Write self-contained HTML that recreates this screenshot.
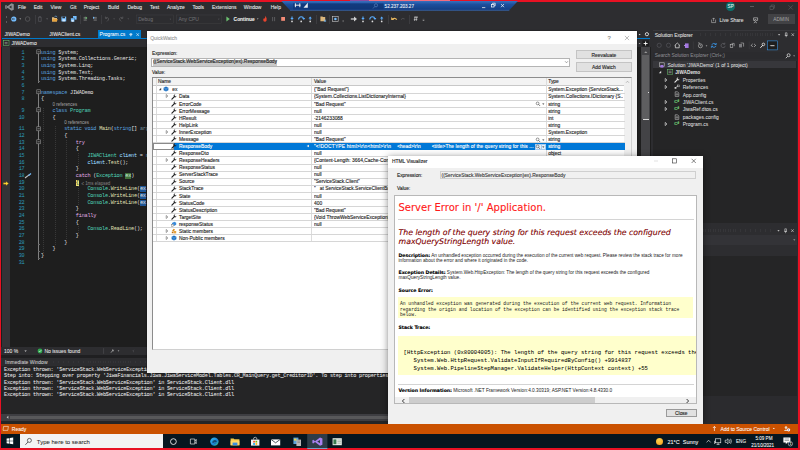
<!DOCTYPE html><html><head><meta charset="utf-8"><title>QuickWatch</title><style>
html,body{margin:0;padding:0;}
body{-webkit-text-stroke:0.05px currentColor;width:800px;height:450px;overflow:hidden;background:#e81123;position:relative;font-family:"Liberation Sans",sans-serif;font-size:5px;color:#f1f1f1;}
.a{position:absolute;white-space:nowrap;}
.t{position:absolute;white-space:nowrap;line-height:1;}
.ui{font-family:"Liberation Sans",sans-serif;font-size:5px;}
.t.ui{margin-top:0.8px}
.mono{font-family:"Liberation Mono",monospace;}
.code{-webkit-text-stroke:0.04px currentColor;font-family:"Liberation Mono",monospace;font-size:5.2px;letter-spacing:-0.203px;color:#dcdcdc;white-space:pre;line-height:6.667px;height:6.667px;position:absolute;left:0;}
.kw{color:#569cd6}.cl{color:#4ec9b0}.ctl{color:#d8a0df}.fn{color:#dcdcaa}.lv{color:#9cdcfe}
.ln{position:absolute;width:22.5px;text-align:right;left:2px;font-family:"Liberation Mono",monospace;font-size:5.2px;letter-spacing:-0.203px;color:#2b91af;line-height:6.667px;height:6.667px;}
.lens{position:absolute;font-family:"Liberation Sans",sans-serif;font-size:4.45px;color:#999;line-height:5px;height:5px;white-space:pre;}
.dk{color:#1e1e1e}
#qw,#hv{-webkit-text-stroke:0.12px currentColor}
.ar{-webkit-text-stroke:0;color:#1a1a1a}
.row{position:absolute;left:0;width:100%;height:7.083px;border-bottom:0.42px solid #e4e4e4;box-sizing:border-box;}
.cell{position:absolute;top:0;line-height:6.7px;font-size:4.9px;color:#1e1e1e;white-space:nowrap;overflow:hidden;}
</style></head><body>
<div class="a" style="left:1.3px;top:1.5px;width:797.2px;height:422.2px;background:#2d2d30"></div>
<svg class="a" style="left:5px;top:2.6px" width="9" height="8" viewBox="0 0 18 16"><path d="M13 0.5 L17.5 2.5 V13.5 L13 15.5 L5 9.5 L2 12 L0.5 11 V5 L2 4 L5 6.5 Z M13 4.8 L8.3 8 L13 11.2 Z M2 6.3 V9.7 L3.8 8 Z" fill="#8e8e92"/></svg>
<div class="t ui" style="left:18px;top:4px;color:#f1f1f1">File</div>
<div class="t ui" style="left:33.7px;top:4px;color:#f1f1f1">Edit</div>
<div class="t ui" style="left:50.6px;top:4px;color:#f1f1f1">View</div>
<div class="t ui" style="left:70px;top:4px;color:#f1f1f1">Git</div>
<div class="t ui" style="left:83.7px;top:4px;color:#f1f1f1">Project</div>
<div class="t ui" style="left:108px;top:4px;color:#f1f1f1">Build</div>
<div class="t ui" style="left:127.4px;top:4px;color:#f1f1f1">Debug</div>
<div class="t ui" style="left:150px;top:4px;color:#f1f1f1">Test</div>
<div class="t ui" style="left:167px;top:4px;color:#f1f1f1">Analyze</div>
<div class="t ui" style="left:192.4px;top:4px;color:#f1f1f1">Tools</div>
<div class="t ui" style="left:212px;top:4px;color:#f1f1f1">Extensions</div>
<div class="t ui" style="left:243.7px;top:4px;color:#f1f1f1">Window</div>
<div class="t ui" style="left:270.7px;top:4px;color:#f1f1f1">Help</div>
<svg class="a" style="left:280px;top:1px" width="240" height="10" viewBox="0 0 240 10"><defs><linearGradient id="rg" x1="0" y1="0" x2="0" y2="1"><stop offset="0" stop-color="#3a70bd"/><stop offset="0.35" stop-color="#1c4f9e"/><stop offset="1" stop-color="#123c7e"/></linearGradient></defs><path d="M1.4 0 H237.9 L229 9.6 H10.3 Z" fill="url(#rg)"/><rect x="13" y="2.4" width="90.5" height="6.4" fill="#0f3474" opacity="0.75"/><path d="M10 9.3 H229.3" stroke="#4f7fc6" stroke-width="0.5"/><rect x="15" y="5.2" width="95" height="0" fill="none"/><g fill="#fff" stroke="#fff" stroke-width="0.6"><path d="M14.8 4.2 H20.5 M15.4 2.3 V6.2 M19.8 2.3 V6.2" fill="none" stroke-width="0.9"/><path d="M23.5 6.8 L27.8 1.8 V6.8 Z" stroke="none" opacity="0.9"/></g><g stroke="#6f94cf" stroke-width="0.5" fill="none"><circle cx="96" cy="4.3" r="1.6"/><path d="M94.8 5.5 L93 7.5"/></g><g stroke="#fff" stroke-width="0.7" fill="none"><path d="M202 6.6 H205.3"/><rect x="211.6" y="3.4" width="2.4" height="2.6"/><path d="M212.6 3.4 V2.2 H215.2 V4.8 H214"/><path d="M221 3 L224 6.2 M224 3 L221 6.2"/></g></svg>
<div class="t ui" style="left:384.6px;top:3.8px;color:#fff;font-size:4.6px">52.237.203.27</div>
<div class="a" style="left:350px;top:0;width:100px;height:1.4px;background:linear-gradient(90deg,#8a4aa0 0 19px,#f26d80 19px)"></div>
<div class="a" style="left:726.4px;top:2.4px;width:8.4px;height:8.4px;border-radius:50%;background:#0c6e6a"></div>
<div class="t ui" style="left:727.6px;top:4.4px;font-size:4.6px;color:#f0f8f6">SP</div>
<svg class="a" style="left:744px;top:2px" width="54" height="11" viewBox="0 0 54 11"><g stroke="#6a6a6e" stroke-width="0.5" fill="none"><path d="M6 4.5 H10" stroke="#8a8a8a"/><rect x="26" y="4.2" width="3.2" height="3.2"/><path d="M27.2 4.2 V3 H30.4 V6.2 H29.2"/><path d="M44.5 3.3 L48.8 7.6 M48.8 3.3 L44.5 7.6"/></g></svg>
<div class="a" style="left:5.8px;top:15px;width:0.8px;height:8px;background:repeating-linear-gradient(#5a5a5e 0 0.5px,transparent 0.5px 1.25px)"></div>
<svg class="a" style="left:0;top:13px" width="440" height="13" viewBox="0 0 440 13"><circle cx="13.8" cy="6" r="2.6" fill="#75beff"/><path d="M15 6 H12.4 M13.4 4.9 L12.3 6 L13.4 7.1" stroke="#2d2d30" stroke-width="0.6" fill="none"/><path d="M19.4 5.6 h1.8 l-0.9 1 z" fill="#c8c8c8"/><circle cx="27.6" cy="6" r="2.3" fill="none" stroke="#5e5e62" stroke-width="0.7"/><path d="M38.6 4 h2.6 v4.4 h-2.6 z M40 3.3 v1.4 M39.3 4 h1.4" stroke="#606065" stroke-width="0.6" fill="none"/><path d="M46.2 5.6 h1.8 l-0.9 1 z" fill="#77777a"/><path d="M52 4.2 h2 l0.6 0.7 h2.4 v3.6 h-5 z" fill="#dcb67a"/><path d="M52.8 6 h4.9 l-0.8 2.5 h-4.9 z" fill="#e8a33d"/><path d="M54.6 3.4 q1.6 -1 2.6 0.6" stroke="#75beff" stroke-width="0.6" fill="none"/><rect x="61.4" y="3.6" width="4.8" height="4.8" fill="#75beff"/><rect x="62.4" y="3.6" width="2.6" height="1.6" fill="#2d2d30"/><rect x="62.4" y="6.4" width="2.8" height="2" fill="#cfe8ff"/><rect x="73" y="3" width="3.6" height="3.6" fill="#75beff"/><rect x="70.8" y="5" width="3.8" height="3.8" fill="#75beff" stroke="#2d2d30" stroke-width="0.4"/><rect x="71.6" y="7" width="2.2" height="1.8" fill="#cfe8ff"/><path d="M83.6 4.4 h3.2 M83.6 5.8 h3.2 M83.6 7.2 h3.2" stroke="#9a9a9a" stroke-width="0.6"/><path d="M85.6 3.6 l1.8 1.4 l-1.8 1.4 z" fill="#6cc070"/><path d="M93.6 4.4 h3.2 M93.6 5.8 h3.2 M93.6 7.2 h3.2" stroke="#9a9a9a" stroke-width="0.6"/><path d="M93 3.6 l1.6 1.2 l-1.6 1.2 z" fill="#75beff"/><path d="M105.6 5 q2.2 -1.6 3 0.6 q0.2 1.6 -1.6 2.8 M105.4 3.6 v1.8 h1.8" stroke="#5e5e62" stroke-width="0.7" fill="none"/><path d="M113.2 5.6 h1.8 l-0.9 1 z" fill="#5e5e62"/><path d="M122.6 5 q-2.2 -1.6 -3 0.6 q-0.2 1.6 1.6 2.8 M122.8 3.6 v1.8 h-1.8" stroke="#5e5e62" stroke-width="0.7" fill="none"/><path d="M127.4 5.6 h1.8 l-0.9 1 z" fill="#5e5e62"/><rect x="136.2" y="2" width="37.2" height="8.3" fill="#2d2d30" stroke="#434346" stroke-width="0.45"/><path d="M169.6 5.8 h1.6 l-0.8 0.9 z" fill="#5e5e62"/><rect x="176.4" y="2" width="45.2" height="8.3" fill="#2d2d30" stroke="#434346" stroke-width="0.45"/><path d="M218 5.8 h1.6 l-0.8 0.9 z" fill="#5e5e62"/><path d="M226.4 3.4 l3.4 2.6 l-3.4 2.6 z" fill="#6cc070"/><path d="M256.8 5.6 h1.8 l-0.9 1 z" fill="#c8c8c8"/><path d="M265 2.8 q2.6 2.4 1.6 4.8 q-0.6 1.2 -1.8 1.2 q-1.6 -0.2 -1.6 -2 q0.2 -1.2 1 -1.8 q0.2 0.8 0.6 0.8 q0.6 -1.2 0.2 -3 z" fill="#e8442e"/><path d="M272.6 4 v4.2 M274.6 4 v4.2" stroke="#5e5e62" stroke-width="0.9"/><rect x="281.2" y="4" width="3.8" height="3.8" fill="#f38b76"/><circle cx="292" cy="8.4" r="0.85" fill="#e0e0e0"/><path d="M292 3.6 v2" stroke="#5aaeff" stroke-width="1.1" fill="none"/><path d="M290.3 5 h3.4 l-1.7 2 z" fill="#5aaeff"/><circle cx="301.2" cy="8.4" r="0.85" fill="#e0e0e0"/><path d="M298.59999999999997 6.6 q0 -2.8 2.6 -2.8 q2.2 0 2.4 2" stroke="#5aaeff" stroke-width="1.1" fill="none"/><path d="M302.2 5 h3 l-1.4 2 z" fill="#5aaeff"/><circle cx="310.2" cy="8.4" r="0.85" fill="#e0e0e0"/><path d="M310.2 5.2 v1.6" stroke="#5aaeff" stroke-width="1.1" fill="none"/><path d="M308.5 5.6 h3.4 l-1.7 -2.2 z" fill="#5aaeff"/><path d="M320.4 3.4 h2 l0.6 0.7 h2.2 v4.2 h-4.8 z" fill="#dcb67a"/><path d="M323.6 6.4 l2 2 M325.6 6.6 v1.8 h-1.8" stroke="#75beff" stroke-width="0.6" fill="none"/><rect x="332.6" y="3.4" width="5.6" height="5" fill="none" stroke="#c8c8c8" stroke-width="0.6"/><circle cx="335.4" cy="6" r="1.3" fill="#75beff"/><path d="M342.4 7.6 h1.6 M342.4 8.6 h1.6" stroke="#9a9a9a" stroke-width="0.4"/><path d="M350.8 6 h4.4" stroke="#d0d0d0" stroke-width="1.3" fill="none"/><path d="M354 3.4 l3 2.6 l-3 2.6 z" fill="#d0d0d0"/><circle cx="363" cy="8.4" r="0.85" fill="#e0e0e0"/><path d="M363 3.6 v2" stroke="#5aaeff" stroke-width="1.1" fill="none"/><path d="M361.3 5 h3.4 l-1.7 2 z" fill="#5aaeff"/><circle cx="372.4" cy="8.4" r="0.85" fill="#e0e0e0"/><path d="M369.79999999999995 6.6 q0 -2.8 2.6 -2.8 q2.2 0 2.4 2" stroke="#5aaeff" stroke-width="1.1" fill="none"/><path d="M373.4 5 h3 l-1.4 2 z" fill="#5aaeff"/><circle cx="381.7" cy="8.4" r="0.85" fill="#e0e0e0"/><path d="M381.7 5.2 v1.6" stroke="#5aaeff" stroke-width="1.1" fill="none"/><path d="M380.0 5.6 h3.4 l-1.7 -2.2 z" fill="#5aaeff"/><path d="M392.6 6.2 q2 -2 4.2 0.4" stroke="#e8b860" stroke-width="1.2" fill="none"/><path d="M391.2 4 v3 h3 z" fill="#e8b860"/><path d="M401 6.6 q1.6 -2 3.6 -0.6" stroke="#5e5e62" stroke-width="0.7" fill="none"/><path d="M414.2 4.4 h3.6 M413.8 6.4 h3.6 M415.2 3 l-0.8 5 M417 3 l-0.8 5" stroke="#e0e0e0" stroke-width="0.55" fill="none"/><path d="M422.6 7 h1.8 l-0.9 1 z M422.6 6.2 h1.8" fill="#9a9a9a" stroke="#9a9a9a" stroke-width="0.3"/></svg>
<div class="a" style="left:34.5px;top:14.5px;width:0.45px;height:9px;background:#3c3c40"></div>
<div class="a" style="left:80px;top:14.5px;width:0.45px;height:9px;background:#3c3c40"></div>
<div class="a" style="left:100.8px;top:14.5px;width:0.45px;height:9px;background:#3c3c40"></div>
<div class="a" style="left:316px;top:14.5px;width:0.45px;height:9px;background:#3c3c40"></div>
<div class="a" style="left:329px;top:14.5px;width:0.45px;height:9px;background:#3c3c40"></div>
<div class="a" style="left:388px;top:14.5px;width:0.45px;height:9px;background:#3c3c40"></div>
<div class="a" style="left:409px;top:14.5px;width:0.45px;height:9px;background:#3c3c40"></div>
<div class="a" style="left:346.7px;top:15px;width:0.8px;height:8px;background:repeating-linear-gradient(#5a5a5e 0 0.5px,transparent 0.5px 1.25px)"></div>
<div class="t ui" style="left:138.2px;top:16.4px;color:#6e6e72">Debug</div>
<div class="t ui" style="left:178.4px;top:16.4px;color:#6e6e72">Any CPU</div>
<div class="t ui" style="left:233.6px;top:17.6px;color:#f1f1f1;font-weight:bold;font-size:4.9px">Continue</div>
<svg class="a" style="left:707px;top:15px" width="54" height="10" viewBox="0 0 54 10"><g stroke="#e0e0e0" stroke-width="0.55" fill="none"><path d="M4.6 4.6 v3 h4 v-3 M6.6 6.2 v-3.2 M5.6 4 l1 -1.1 l1 1.1" stroke="#c8c8c8"/><path d="M46.6 2.8 h4 v2.6 h-1 M46.6 2.8 v2.6 h0.8"/><circle cx="48.4" cy="5.4" r="0.9"/><path d="M46.8 8 q1.6 -2 3.2 0"/></g></svg>
<div class="t ui" style="left:719.6px;top:17.4px;color:#e4e4e4;font-size:5px">Live Share</div>
<div class="a" style="left:768.2px;top:14.2px;width:26.4px;height:9.8px;background:#424245"></div>
<div class="t ui" style="left:773.2px;top:17.5px;color:#a0a0a0;font-size:4.8px;letter-spacing:0.1px">ADMIN</div>
<div class="t ui" style="left:4.6px;top:31.4px;color:#f1f1f1">JIWADemo</div>
<div class="t ui" style="left:49.3px;top:31.4px;color:#f1f1f1">JIWAClient.cs</div>
<div class="a" style="left:97.6px;top:30.3px;width:43.6px;height:8px;background:#007acc"></div>
<div class="t ui" style="left:99.6px;top:31.4px;color:#fff">Program.cs</div>
<svg class="a" style="left:127px;top:31px" width="14" height="7" viewBox="0 0 14 7"><g stroke="#fff" stroke-width="0.55" fill="none"><path d="M2.4 3.6 h2.8 M3 2.6 h1.8 v1.4 h-1.8 z M3.8 4 v1.4"/><path d="M9.4 2.2 L12 5 M12 2.2 L9.4 5"/></g></svg>
<div class="a" style="left:2.3px;top:38px;width:648px;height:1.3px;background:#007acc"></div>
<div class="a" style="left:1.3px;top:39.3px;width:650px;height:7.9px;background:#2d2d30"></div>
<svg class="a" style="left:3.4px;top:40.2px" width="6.4" height="6.2" viewBox="0 0 6.4 6.2"><rect x="0.4" y="0.5" width="5.6" height="5.2" fill="#252526" stroke="#6cc070" stroke-width="0.55"/><path d="M1.6 2.4 h3 M1.6 3.8 h3" stroke="#c8c8c8" stroke-width="0.5"/></svg>
<div class="t ui" style="left:11.6px;top:40.7px;color:#f1f1f1">JIWADemo</div>
<svg class="a" style="left:637px;top:31px" width="14" height="16" viewBox="0 0 14 16"><path d="M1.6 3.1 h2 l-1 1.1 z" fill="#e0e0e0"/><circle cx="9.9" cy="3.2" r="1.6" fill="none" stroke="#e0e0e0" stroke-width="0.9"/><path d="M1.6 12 h2 l-1 1.1 z" fill="#c0c0c0"/><rect x="5.4" y="9.5" width="6.4" height="5.9" fill="#1b1b1c"/><path d="M8.6 10.5 v4 M6.6 12.5 h4" stroke="#fff" stroke-width="0.9"/></svg>
<div class="a" id="ed" style="left:1.3px;top:47.2px;width:649.5px;height:300px;background:#1e1e1e;overflow:hidden">
<div class="a" style="left:0.7px;top:0;width:7.6px;height:300px;background:#333337"></div>
<div class="ln" style="top:2.47px;left:0.7px">1</div>
<div class="code" style="left:39.60px;top:2.47px"><span class="kw">using</span> System;</div>
<div class="ln" style="top:9.14px;left:0.7px">2</div>
<div class="code" style="left:39.60px;top:9.14px"><span class="kw">using</span> System.Collections.Generic;</div>
<div class="ln" style="top:15.80px;left:0.7px">3</div>
<div class="code" style="left:39.60px;top:15.80px"><span class="kw">using</span> System.Linq;</div>
<div class="ln" style="top:22.47px;left:0.7px">4</div>
<div class="code" style="left:39.60px;top:22.47px"><span class="kw">using</span> System.Text;</div>
<div class="ln" style="top:29.14px;left:0.7px">5</div>
<div class="code" style="left:39.60px;top:29.14px"><span class="kw">using</span> System.Threading.Tasks;</div>
<div class="ln" style="top:35.80px;left:0.7px">6</div>
<div class="ln" style="top:42.47px;left:0.7px">7</div>
<div class="code" style="left:39.60px;top:42.47px"><span class="kw">namespace</span> JIWADemo</div>
<div class="ln" style="top:49.14px;left:0.7px">8</div>
<div class="code" style="left:39.60px;top:49.14px">{</div>
<div class="lens" style="left:51.27px;top:54.91px">0 references</div>
<div class="ln" style="top:60.81px;left:0.7px">9</div>
<div class="code" style="left:39.60px;top:60.81px">    <span class="kw">class</span> <span class="cl">Program</span></div>
<div class="ln" style="top:67.47px;left:0.7px">10</div>
<div class="code" style="left:39.60px;top:67.47px">    {</div>
<div class="lens" style="left:62.94px;top:73.24px">0 references</div>
<div class="ln" style="top:79.14px;left:0.7px">11</div>
<div class="code" style="left:39.60px;top:79.14px">        <span class="kw">static</span> <span class="kw">void</span> <span class="fn">Main</span>(<span class="kw">string</span>[] <span style="color:#6c8494">args</span>)</div>
<div class="ln" style="top:85.81px;left:0.7px">12</div>
<div class="code" style="left:39.60px;top:85.81px">        {</div>
<div class="ln" style="top:92.47px;left:0.7px">13</div>
<div class="code" style="left:39.60px;top:92.47px">            <span class="ctl">try</span></div>
<div class="ln" style="top:99.14px;left:0.7px">14</div>
<div class="code" style="left:39.60px;top:99.14px">            {</div>
<div class="ln" style="top:105.81px;left:0.7px">15</div>
<div class="code" style="left:39.60px;top:105.81px">                <span class="cl">JIWAClient</span> <span class="lv">client</span> = <span class="kw">new</span> <span class="cl">JIWAClient</span>();</div>
<div class="ln" style="top:112.48px;left:0.7px">16</div>
<div class="code" style="left:39.60px;top:112.48px">                <span class="lv">client</span>.<span class="fn">Test</span>();</div>
<div class="ln" style="top:119.14px;left:0.7px">17</div>
<div class="code" style="left:39.60px;top:119.14px">            }</div>
<div class="ln" style="top:125.81px;left:0.7px">18</div>
<div class="code" style="left:39.60px;top:125.81px">            <span class="ctl">catch</span> (<span class="cl">Exception</span> <span style="background:#41713a;color:#c8e8d8">ex</span>)</div>
<div class="ln" style="top:132.48px;left:0.7px">19</div>
<div class="code" style="left:39.60px;top:132.48px">            <span style="background:#ece678;color:#1e1e1e">{</span></div>
<div class="ln" style="top:139.14px;left:0.7px">20</div>
<div class="code" style="left:39.60px;top:139.14px">                <span class="cl">Console</span>.<span class="fn">WriteLine</span>(<span style="background:#1f5596">ex</span>.Message);</div>
<div class="ln" style="top:145.81px;left:0.7px">21</div>
<div class="code" style="left:39.60px;top:145.81px">                <span class="cl">Console</span>.<span class="fn">WriteLine</span>(<span style="background:#1f5596">ex</span>.StatusCode);</div>
<div class="ln" style="top:152.48px;left:0.7px">22</div>
<div class="code" style="left:39.60px;top:152.48px">                <span class="cl">Console</span>.<span class="fn">WriteLine</span>(<span style="background:#1f5596">ex</span>.ResponseBody);</div>
<div class="ln" style="top:159.14px;left:0.7px">23</div>
<div class="code" style="left:39.60px;top:159.14px">            }</div>
<div class="ln" style="top:165.81px;left:0.7px">24</div>
<div class="code" style="left:39.60px;top:165.81px">            <span class="ctl">finally</span></div>
<div class="ln" style="top:172.48px;left:0.7px">25</div>
<div class="code" style="left:39.60px;top:172.48px">            {</div>
<div class="ln" style="top:179.15px;left:0.7px">26</div>
<div class="code" style="left:39.60px;top:179.15px">                <span class="cl">Console</span>.<span class="fn">ReadLine</span>();</div>
<div class="ln" style="top:185.81px;left:0.7px">27</div>
<div class="code" style="left:39.60px;top:185.81px">            }</div>
<div class="ln" style="top:192.48px;left:0.7px">28</div>
<div class="code" style="left:39.60px;top:192.48px">        }</div>
<div class="ln" style="top:199.15px;left:0.7px">29</div>
<div class="code" style="left:39.60px;top:199.15px">    }</div>
<div class="ln" style="top:205.81px;left:0.7px">30</div>
<div class="code" style="left:39.60px;top:205.81px">}</div>
<div class="ln" style="top:212.48px;left:0.7px">31</div>
<div class="lens" style="left:80.20px;top:133.58px;color:#7c7c7c">≤ 1ms elapsed</div>
<div class="a" style="left:36.60px;top:2.47px;width:0.55px;height:33.34px;background:#808080"></div>
<div class="a" style="left:36.60px;top:42.47px;width:0.55px;height:170.01px;background:#808080"></div>
<svg class="a" style="left:34.30px;top:1.97px" width="6" height="6" viewBox="0 0 6 6"><rect x="0.8" y="0.8" width="3.7" height="4" fill="#1e1e1e" stroke="#a0a0a0" stroke-width="0.55"/><path d="M1.6 2.8 h2.1" stroke="#d0d0d0" stroke-width="0.55"/></svg>
<svg class="a" style="left:34.30px;top:41.97px" width="6" height="6" viewBox="0 0 6 6"><rect x="0.8" y="0.8" width="3.7" height="4" fill="#1e1e1e" stroke="#a0a0a0" stroke-width="0.55"/><path d="M1.6 2.8 h2.1" stroke="#d0d0d0" stroke-width="0.55"/></svg>
<svg class="a" style="left:34.30px;top:60.31px" width="6" height="6" viewBox="0 0 6 6"><rect x="0.8" y="0.8" width="3.7" height="4" fill="#1e1e1e" stroke="#a0a0a0" stroke-width="0.55"/><path d="M1.6 2.8 h2.1" stroke="#d0d0d0" stroke-width="0.55"/></svg>
<svg class="a" style="left:34.30px;top:78.64px" width="6" height="6" viewBox="0 0 6 6"><rect x="0.8" y="0.8" width="3.7" height="4" fill="#1e1e1e" stroke="#a0a0a0" stroke-width="0.55"/><path d="M1.6 2.8 h2.1" stroke="#d0d0d0" stroke-width="0.55"/></svg>
<svg class="a" style="left:34.30px;top:91.97px" width="6" height="6" viewBox="0 0 6 6"><rect x="0.8" y="0.8" width="3.7" height="4" fill="#1e1e1e" stroke="#a0a0a0" stroke-width="0.55"/><path d="M1.6 2.8 h2.1" stroke="#d0d0d0" stroke-width="0.55"/></svg>
<div class="a" style="left:36.60px;top:33.74px;width:2.6px;height:1px;background:#6a6a6a"></div>
<div class="a" style="left:36.60px;top:197.08px;width:2.6px;height:1px;background:#6a6a6a"></div>
<div class="a" style="left:36.60px;top:203.75px;width:2.6px;height:1px;background:#6a6a6a"></div>
<div class="a" style="left:36.60px;top:210.41px;width:2.6px;height:1px;background:#6a6a6a"></div>
<div class="a" style="left:41.90px;top:60.81px;width:1px;height:145.01px;background:repeating-linear-gradient(#383838 0 1px,transparent 1px 2px)"></div>
<div class="a" style="left:53.60px;top:79.14px;width:1px;height:120.01px;background:repeating-linear-gradient(#383838 0 1px,transparent 1px 2px)"></div>
<div class="a" style="left:65.20px;top:92.47px;width:1px;height:100.01px;background:repeating-linear-gradient(#383838 0 1px,transparent 1px 2px)"></div>
<div class="a" style="left:76.90px;top:105.81px;width:1px;height:13.33px;background:repeating-linear-gradient(#383838 0 1px,transparent 1px 2px)"></div>
<div class="a" style="left:76.90px;top:139.14px;width:1px;height:20.00px;background:repeating-linear-gradient(#383838 0 1px,transparent 1px 2px)"></div>
<div class="a" style="left:76.90px;top:179.15px;width:1px;height:6.67px;background:repeating-linear-gradient(#383838 0 1px,transparent 1px 2px)"></div>
<svg class="a" style="left:2.10px;top:133.38px" width="6" height="5" viewBox="0 0 6 5"><path d="M0.4 1.7 h2.6 v-1.3 l2.6 2.1 l-2.6 2.1 v-1.3 h-2.6 z" fill="#ffd83b" stroke="#8a6d00" stroke-width="0.3"/></svg>
<svg class="a" style="left:23.10px;top:126.01px" width="8" height="6" viewBox="0 0 8 6"><path d="M1 5 L5.4 1.6" stroke="#c8c8c8" stroke-width="1.1"/><path d="M4.6 2.4 L7 0.6" stroke="#75beff" stroke-width="1.3"/></svg>
</div>
<div class="a" style="left:641.3px;top:47.2px;width:9.2px;height:300px;background:#434346"></div>
<div class="a" style="left:642.3px;top:55.4px;width:7.2px;height:63.6px;background:#5e5e60"></div>
<div class="a" style="left:642.6px;top:119px;width:6.6px;height:1px;background:#d8d8d8"></div>
<div class="a" style="left:647.6px;top:91.6px;width:1.2px;height:1px;background:#e0e0e0"></div>
<svg class="a" style="left:643px;top:49.6px" width="6" height="4" viewBox="0 0 6 4"><path d="M1.2 3 L2.8 1.2 L4.4 3 z" fill="#999"/></svg>
<div class="a" style="left:1.3px;top:347px;width:649.5px;height:7.5px;background:#2d2d30"></div>
<div class="t ui" style="left:4px;top:348.6px;color:#e8e8e8">100 %</div>
<svg class="a" style="left:22px;top:347px" width="120" height="8" viewBox="0 0 120 8"><path d="M2.4 3.4 h2.4 l-1.2 1.3 z" fill="#d8d8d8"/><circle cx="18" cy="4" r="2.4" fill="#2fa84f"/><path d="M16.8 4 l0.9 0.9 l1.6 -1.8" stroke="#fff" stroke-width="0.6" fill="none"/><path d="M81.6 1.2 v5.6" stroke="#5a5a5e" stroke-width="0.5"/><path d="M89 5.6 l2.4 -2.8 M90 2.6 l1.8 1.4" stroke="#c8c8c8" stroke-width="0.7" fill="none"/><path d="M95.6 3.6 h1.8 l-0.9 1 z" fill="#c8c8c8"/><path d="M112 2.8 l-1.2 1.2 l1.2 1.2" stroke="#55555a" stroke-width="0.6" fill="none"/></svg>
<div class="t ui" style="left:44.4px;top:348.6px;color:#e8e8e8">No issues found</div>
<div class="a" style="left:1.3px;top:354.5px;width:649.5px;height:3.4px;background:#1f1f21"></div>
<div class="a" style="left:1.3px;top:357.8px;width:649.5px;height:8.4px;background:#2d2d30"></div>
<div class="a" style="left:50px;top:360.6px;width:598px;height:2.6px;background:repeating-linear-gradient(90deg,#46464a 0 0.42px,transparent 0.42px 1.67px);opacity:.3"></div>
<div class="t ui" style="left:5px;top:359.6px;color:#d0d0d0">Immediate Window</div>
<div class="a" style="left:1.3px;top:366px;width:649.5px;height:57.6px;background:#252526;overflow:hidden">
<div class="code" style="left:2.7px;top:0.90px;color:#e6e6e6;line-height:6.25px;height:6.25px">Exception thrown: 'ServiceStack.WebServiceException' in ServiceStack.Client.dll</div>
<div class="code" style="left:2.7px;top:7.20px;color:#e6e6e6;line-height:6.25px;height:6.25px">Step into: Stepping over property 'JiwaFinancials.Jiwa.JiwaServiceModel.Tables.CR_MainQuery.get_CreditorID'. To step into properties or operators, go to Tools-&gt;Options-&gt;Debugging and uncheck 'Step over properties and operators (Managed only)'.</div>
<div class="code" style="left:2.7px;top:13.50px;color:#e6e6e6;line-height:6.25px;height:6.25px">Exception thrown: 'ServiceStack.WebServiceException' in ServiceStack.Client.dll</div>
<div class="code" style="left:2.7px;top:19.80px;color:#e6e6e6;line-height:6.25px;height:6.25px">Exception thrown: 'ServiceStack.WebServiceException' in ServiceStack.Client.dll</div>
<div class="code" style="left:2.7px;top:26.10px;color:#e6e6e6;line-height:6.25px;height:6.25px">Exception thrown: 'ServiceStack.WebServiceException' in ServiceStack.Client.dll</div>
<div class="a" style="left:0;top:47.6px;width:649.5px;height:7.4px;background:#3e3e42"></div>
<div class="a" style="left:9.1px;top:49.8px;width:640px;height:3.6px;background:#58585a"></div>
<svg class="a" style="left:3.4px;top:49.2px" width="5" height="5" viewBox="0 0 5 5"><path d="M3.4 0.8 L1.6 2.3 L3.4 3.8 z" fill="#c8c8c8"/></svg>
</div>
<div class="a" style="left:652.5px;top:27px;width:144.10000000000002px;height:196px;background:#252526"></div>
<div class="a" style="left:652.5px;top:27px;width:144.10000000000002px;height:34px;background:#2d2d30"></div>
<div class="a" style="left:652.5px;top:30px;width:144.10000000000002px;height:1px;background:#38383c"></div>
<div class="t ui" style="left:654.7px;top:32.2px;color:#e4e4e4">Solution Explorer</div>
<div class="a" style="left:697px;top:33.4px;width:78px;height:2.6px;opacity:.35;background:repeating-linear-gradient(90deg,#46464a 0 0.42px,transparent 0.42px 1.67px)"></div>
<svg class="a" style="left:775px;top:31px" width="22" height="8" viewBox="0 0 22 8"><path d="M3 3.2 h2.2 l-1.1 1.2 z" fill="#e0e0e0"/><g stroke="#e0e0e0" stroke-width="0.55" fill="none"><path d="M10.4 1.8 h1.6 v2.6 h-1.6 z M9.8 4.4 h2.8 M11.2 4.4 v1.8"/><path d="M16.5 2.3 L19 5 M19 2.3 L16.5 5"/></g></svg>
<svg class="a" style="left:652px;top:40px" width="146" height="11" viewBox="0 0 146 11"><circle cx="7.2" cy="5.3" r="2.1" fill="none" stroke="#55555a" stroke-width="0.7"/><circle cx="16.5" cy="5.3" r="2.1" fill="none" stroke="#55555a" stroke-width="0.7"/><path d="M22.6 5.6 L25.3 3 L28 5.6 M23.4 5.2 V7.8 H27.2 V5.2" stroke="#e8e8e8" stroke-width="0.7" fill="none"/><path d="M33 3.4 h3.6 v4.6 h-3.6 z" fill="#a377e0"/><path d="M31.8 5.6 l1.6 -1 v2 z" fill="#c8a8ff"/><path d="M41.3 1.5 v7.8" stroke="#46464a" stroke-width="0.45"/><circle cx="48.4" cy="5.8" r="2" fill="none" stroke="#c8c8c8" stroke-width="0.6"/><path d="M48.4 4.6 v1.3 h1 M46 3.2 l1.2 -0.6 l0.4 1.3" stroke="#c8c8c8" stroke-width="0.5" fill="none"/><path d="M53.6 5.4 h1.8 l-0.9 1 z" fill="#c8c8c8"/><path d="M59.6 4.6 q2.2 -2.4 4.4 -0.2 M64.2 3 v1.6 h-1.6 M64.2 6.2 q-2.2 2.4 -4.4 0.2 M59.4 7.8 v-1.6 h1.6" stroke="#3a9bf0" stroke-width="0.8" fill="none"/><path d="M72.6 4 a2.1 2.1 0 1 0 0.6 1.8 M72.8 2.6 v1.6 h-1.6" stroke="#6a6a6e" stroke-width="0.6" fill="none"/><rect x="78.2" y="4.6" width="2.6" height="2.8" fill="none" stroke="#c8c8c8" stroke-width="0.55"/><path d="M79.6 3.4 h2.6 v2.8" stroke="#c8c8c8" stroke-width="0.55" fill="none"/><rect x="87" y="4" width="3" height="3.4" fill="#7a7a7e"/><path d="M88.6 3 h3 v3.6" stroke="#c8c8c8" stroke-width="0.55" fill="none"/><path d="M97.2 1.5 v7.8" stroke="#46464a" stroke-width="0.45"/><path d="M100.6 4 l-1.4 1.4 l1.4 1.4 M102.2 4 l1.4 1.4 l-1.4 1.4" stroke="#e8e8e8" stroke-width="0.65" fill="none"/><path d="M108.4 7.8 l2.4 -2.6" stroke="#e8e8e8" stroke-width="1"/><circle cx="111.4" cy="4.4" r="1.3" fill="none" stroke="#e8e8e8" stroke-width="0.8"/><rect x="115.3" y="0.9" width="10" height="9" fill="#1e1e1e" stroke="#3a9bf0" stroke-width="0.55"/><path d="M118.6 5.7 h3.9" stroke="#e8e8e8" stroke-width="0.9"/><path d="M118.3 5 v1" stroke="#e8e8e8" stroke-width="0.4"/></svg>
<div class="a" style="left:653.2px;top:51.5px;width:144.6px;height:7.7px;background:#2b2b2e"></div>
<div class="t ui" style="left:654.7px;top:53px;color:#8a8a8e;font-size:4.87px">Search Solution Explorer (Ctrl+;)</div>
<svg class="a" style="left:784px;top:51.5px" width="14" height="8" viewBox="0 0 14 8"><circle cx="4.6" cy="3.2" r="1.5" fill="none" stroke="#e8e8e8" stroke-width="0.7"/><path d="M3.6 4.4 L1.8 6.2" stroke="#e8e8e8" stroke-width="0.8"/><path d="M9.2 3.4 h1.8 l-0.9 1 z" fill="#c8c8c8"/></svg>
<div class="a" style="left:653px;top:60.8px;width:143px;height:7.4px;background:#37373b"></div>
<div class="t ui" style="left:667.5px;top:61.90px;color:#dedede;">Solution 'JIWADemo' (1 of 1 project)</div>
<svg class="a" style="left:658.90px;top:61.50px" width="6" height="6" viewBox="0 0 6 6"><rect x="0.6" y="0.8" width="4.6" height="3.6" fill="none" stroke="#d0d0d0" stroke-width="0.55"/><path d="M1.4 3 h3 v2.6 h-3 z" fill="#a377e0"/></svg>
<div class="t ui" style="left:675.2px;top:69.40px;color:#dedede;font-weight:bold;font-size:4.8px;margin-top:1.2px;">JIWADemo</div>
<svg class="a" style="left:666.60px;top:69.00px" width="6.4" height="6" viewBox="0 0 6.4 6"><rect x="0.4" y="0.6" width="5.4" height="4.6" fill="none" stroke="#6cc070" stroke-width="0.55"/><path d="M1.6 2.2 h3 M1.6 3.6 h3" stroke="#c8c8c8" stroke-width="0.5"/></svg>
<svg class="a" style="left:657.50px;top:70.00px" width="4" height="4" viewBox="0 0 4 4"><path d="M3.2 0.8 v2.4 h-2.4 z" fill="#e0e0e0"/></svg>
<div class="t ui" style="left:682.7px;top:76.90px;color:#dedede;">Properties</div>
<svg class="a" style="left:674.10px;top:76.50px" width="6" height="6" viewBox="0 0 6 6"><path d="M0.9 5.1 L3.4 2.6" stroke="#e8e8e8" stroke-width="1.15" stroke-linecap="round"/><path d="M2.5 2 Q2.7 0.6 4.3 0.6 L3.5 1.7 L4.3 2.5 L5.4 1.7 Q5.4 3.3 4 3.5 Z" fill="#e8e8e8"/></svg>
<svg class="a" style="left:663.90px;top:77.50px" width="4" height="4" viewBox="0 0 4 4"><path d="M1.2 0.4 L3 2 L1.2 3.6 z" fill="none" stroke="#f0f0f0" stroke-width="0.6"/></svg>
<div class="t ui" style="left:682.7px;top:84.40px;color:#dedede;">References</div>
<svg class="a" style="left:674.10px;top:84.00px" width="6" height="6" viewBox="0 0 6 6"><rect x="0.6" y="3" width="1.8" height="1.8" fill="#d0d0d0"/><rect x="3.4" y="1" width="1.8" height="1.8" fill="none" stroke="#d0d0d0" stroke-width="0.5"/><path d="M2 3.2 l1.6 -1.2" stroke="#d0d0d0" stroke-width="0.5"/></svg>
<svg class="a" style="left:663.90px;top:85.00px" width="4" height="4" viewBox="0 0 4 4"><path d="M1.2 0.4 L3 2 L1.2 3.6 z" fill="none" stroke="#f0f0f0" stroke-width="0.6"/></svg>
<div class="t ui" style="left:682.7px;top:91.80px;color:#dedede;">App.config</div>
<svg class="a" style="left:674.10px;top:91.40px" width="6" height="6" viewBox="0 0 6 6"><path d="M1.2 0.8 h2.4 l1.2 1.2 v3.4 h-3.6 z" fill="none" stroke="#d0d0d0" stroke-width="0.55"/><circle cx="3" cy="3.4" r="0.8" fill="none" stroke="#d0d0d0" stroke-width="0.5"/></svg>
<div class="t ui" style="left:682.7px;top:99.30px;color:#dedede;">JIWAClient.cs</div>
<div class="t" style="left:674.30px;top:99.50px;font-size:4.4px;font-weight:bold;color:#6cc070;-webkit-text-stroke:0.15px #6cc070;font-family:'Liberation Sans',sans-serif">C<span style="font-size:2.8px;vertical-align:1.3px">#</span></div>
<svg class="a" style="left:663.90px;top:99.90px" width="4" height="4" viewBox="0 0 4 4"><path d="M1.2 0.4 L3 2 L1.2 3.6 z" fill="none" stroke="#f0f0f0" stroke-width="0.6"/></svg>
<div class="t ui" style="left:682.7px;top:106.70px;color:#dedede;">JiwaRef.dtos.cs</div>
<div class="t" style="left:674.30px;top:106.90px;font-size:4.4px;font-weight:bold;color:#6cc070;-webkit-text-stroke:0.15px #6cc070;font-family:'Liberation Sans',sans-serif">C<span style="font-size:2.8px;vertical-align:1.3px">#</span></div>
<svg class="a" style="left:663.90px;top:107.30px" width="4" height="4" viewBox="0 0 4 4"><path d="M1.2 0.4 L3 2 L1.2 3.6 z" fill="none" stroke="#f0f0f0" stroke-width="0.6"/></svg>
<div class="t ui" style="left:682.7px;top:114.20px;color:#dedede;">packages.config</div>
<svg class="a" style="left:674.10px;top:113.80px" width="6" height="6" viewBox="0 0 6 6"><path d="M1.2 0.8 h2.4 l1.2 1.2 v3.4 h-3.6 z" fill="none" stroke="#d0d0d0" stroke-width="0.55"/><circle cx="3" cy="3.4" r="0.8" fill="none" stroke="#d0d0d0" stroke-width="0.5"/></svg>
<div class="t ui" style="left:682.7px;top:121.70px;color:#dedede;">Program.cs</div>
<div class="t" style="left:674.30px;top:121.90px;font-size:4.4px;font-weight:bold;color:#6cc070;-webkit-text-stroke:0.15px #6cc070;font-family:'Liberation Sans',sans-serif">C<span style="font-size:2.8px;vertical-align:1.3px">#</span></div>
<svg class="a" style="left:663.90px;top:122.30px" width="4" height="4" viewBox="0 0 4 4"><path d="M1.2 0.4 L3 2 L1.2 3.6 z" fill="none" stroke="#f0f0f0" stroke-width="0.6"/></svg>
<div class="a" style="left:652.5px;top:223px;width:144.10000000000002px;height:200.7px;background:#252526"></div>
<div class="a" style="left:652.5px;top:222.6px;width:144.10000000000002px;height:0.8px;background:#3a3a3e"></div>
<div class="a" style="left:652.5px;top:223.4px;width:144.10000000000002px;height:11.2px;background:#2d2d30"></div>
<div class="a" style="left:655px;top:229px;width:120px;height:2.6px;opacity:.35;background:repeating-linear-gradient(90deg,#46464a 0 0.42px,transparent 0.42px 1.67px)"></div>
<svg class="a" style="left:775px;top:226.5px" width="22" height="8" viewBox="0 0 22 8"><path d="M2.4 3.2 h2.2 l-1.1 1.2 z" fill="#e0e0e0"/><g stroke="#e0e0e0" stroke-width="0.55" fill="none"><path d="M9.8 1.8 h1.6 v2.6 h-1.6 z M9.2 4.4 h2.8 M10.6 4.4 v1.8"/><path d="M16.2 2.3 L18.7 5 M18.7 2.3 L16.2 5"/></g></svg>
<div class="a" style="left:652.5px;top:234.6px;width:144.10000000000002px;height:10.2px;background:#333337"></div>
<svg class="a" style="left:792px;top:238px" width="5" height="4" viewBox="0 0 5 4"><path d="M1.2 1.4 h2.2 l-1.1 1.2 z" fill="#c8c8c8"/></svg>
<div class="a" style="left:652.5px;top:244.8px;width:144.10000000000002px;height:11.2px;background:#2d2d30"></div>
<div class="a" style="left:652.5px;top:396px;width:144.10000000000002px;height:27.6px;background:#2b2b2e"></div>
<div class="a" style="left:1.3px;top:423.6px;width:797.2px;height:10px;background:#ca5100"></div>
<svg class="a" style="left:2px;top:425px" width="8" height="7" viewBox="0 0 8 7"><path d="M1.6 1.4 h4.8 l-0.6 4 h-4.8 z" fill="none" stroke="#fff" stroke-width="0.55"/></svg>
<div class="t ui" style="left:11.8px;top:426.1px;color:#fff">Ready</div>
<svg class="a" style="left:710px;top:424px" width="88" height="9" viewBox="0 0 88 9"><path d="M4.4 7 v-4.4 M3 4 l1.4 -1.6 l1.4 1.6" stroke="#fff" stroke-width="0.7" fill="none"/><path d="M62.8 5 h2 l-1 -1.2 z" fill="#fff"/><circle cx="76" cy="3.6" r="1.3" fill="#e8d8c8"/><path d="M73.8 7 q2.2 -3 4.4 0 z" fill="#e8d8c8"/><circle cx="78.6" cy="5.8" r="1.6" fill="#fff"/><path d="M78.6 4.9 v1.8" stroke="#4040a0" stroke-width="0.5"/></svg>
<div class="t ui" style="left:720.4px;top:426.1px;color:#fff">Add to Source Control</div>
<div class="a" style="left:1.3px;top:433.6px;width:797.2px;height:14.9px;background:#07161f"></div>
<svg class="a" style="left:6px;top:437.4px" width="8" height="8" viewBox="0 0 8 8"><path d="M0.6 1.6 L3.4 1.2 V3.7 H0.6 Z M3.9 1.1 L7.2 0.6 V3.7 H3.9 Z M0.6 4.2 H3.4 V6.7 L0.6 6.3 Z M3.9 4.2 H7.2 V7.3 L3.9 6.8 Z" fill="#fff"/></svg>
<div class="a" style="left:20px;top:433.6px;width:143.4px;height:14.9px;background:#f3f3f3"></div>
<svg class="a" style="left:24px;top:437px" width="9" height="9" viewBox="0 0 9 9"><circle cx="5.4" cy="3.4" r="2" fill="none" stroke="#222" stroke-width="0.65"/><path d="M4 5 L1.4 7.8" stroke="#222" stroke-width="0.7"/></svg>
<div class="t ui" style="left:36.8px;top:438.3px;color:#2b2b2b;font-size:6px">Type here to search</div>
<svg class="a" style="left:160px;top:433.6px" width="200" height="15" viewBox="0 0 200 15"><circle cx="13.4" cy="7.6" r="2.9" fill="none" stroke="#fff" stroke-width="0.8"/><path d="M30.4 5 h4.4 v5 h-4.4 z M36.2 5 v5 M30.4 7 h-0 M34.8 6.4 h1.4 M34.8 8.8 h1.4" stroke="#fff" stroke-width="0.6" fill="none"/><defs><linearGradient id="eg" x1="0" y1="0" x2="1" y2="1"><stop offset="0" stop-color="#35c1f1"/><stop offset="0.6" stop-color="#1b7fd4"/><stop offset="1" stop-color="#3ad17c"/></linearGradient></defs><circle cx="54.4" cy="7.6" r="4.2" fill="url(#eg)"/><path d="M52 8.6 q0.6 -3.4 4 -2.4 q1.2 0.8 0.6 2 h-3 q0.4 2 3 1.6" fill="#07161f" opacity="0.55"/><path d="M70.6 4.4 h3 l0.8 0.9 h5 v6 h-8.8 z" fill="#f7c948"/><rect x="70.6" y="6.6" width="8.8" height="4.7" fill="#ffd966"/><rect x="72.6" y="8.6" width="4.8" height="2.7" fill="#3a8fe0"/><path d="M91 5.6 h8.4 v6 h-8.4 z" fill="#f5f5f5"/><path d="M93.4 5.6 q0 -2.4 1.8 -2.4 q1.8 0 1.8 2.4" stroke="#f5f5f5" stroke-width="0.6" fill="none"/><rect x="93.2" y="6.8" width="1.7" height="1.7" fill="#f25022"/><rect x="95.5" y="6.8" width="1.7" height="1.7" fill="#7fba00"/><rect x="93.2" y="9.1" width="1.7" height="1.7" fill="#00a4ef"/><rect x="95.5" y="9.1" width="1.7" height="1.7" fill="#ffb900"/><path d="M111 5.4 h9.2 v6 h-9.2 z" fill="#fff"/><path d="M111 5.4 l4.6 3.4 l4.6 -3.4" stroke="#07161f" stroke-width="0.7" fill="none"/><rect x="133.4" y="3.6" width="5" height="6.4" fill="#5aa0d8"/><rect x="136.4" y="5.6" width="4.6" height="6.4" fill="#b8b8b8"/><path d="M134 4.6 h2.4 v2 h-2.4 z" fill="#e8d44a"/><path d="M137.4 7 h2.6 M137.4 8.4 h2.6" stroke="#666" stroke-width="0.5"/><rect x="147.2" y="0" width="20.2" height="15" fill="#2e3c48"/><rect x="147.2" y="14.2" width="20.2" height="0.8" fill="#8fb8e8"/><path d="M160 3.4 L162.4 4.4 V10.8 L160 11.8 L155 7.9 L153.2 9.4 L152.4 9 V6.2 L153.2 5.8 L155 7.3 Z M160 5.9 L157.2 7.6 L160 9.3 Z" fill="#a980f0"/><rect x="172.6" y="4.2" width="9.2" height="7" fill="#e8efe8"/><rect x="173.4" y="5.4" width="3" height="4.8" fill="#3a7a50"/><path d="M177.4 6 h3.6 M177.4 7.6 h3.6 M177.4 9.2 h3.6" stroke="#8a9a8a" stroke-width="0.6"/></svg>
<div class="a" style="left:655.6px;top:437.6px;width:7.4px;height:7.4px;border-radius:50%;background:radial-gradient(circle at 40% 30%,#ffd34d,#f59a1c)"></div>
<div class="t ui" style="left:667.4px;top:439.3px;color:#fff;font-size:5.5px">21°C&nbsp; Sunny</div>
<svg class="a" style="left:704px;top:435px" width="34" height="12" viewBox="0 0 34 12"><g stroke="#fff" stroke-width="0.6" fill="none"><path d="M2.6 7.4 L4.6 5.2 L6.6 7.4"/><rect x="11.4" y="3.8" width="5.4" height="4"/><path d="M12.6 9.4 h3 M14.1 7.8 v1.6 M11.4 6 h-0.8 v3"/><path d="M21.2 5.2 h1.2 l1.6 -1.4 v5 l-1.6 -1.4 h-1.2 z M25.4 4.6 q1 1.6 0 3.4 M26.6 3.8 q1.6 2.4 0 5"/></g></svg>
<div class="t ui" style="left:736px;top:438.8px;color:#fff;font-size:4.6px">ENG</div>
<div class="t ui" style="left:755.4px;top:435.8px;color:#fff;font-size:4.6px">5:09 PM</div>
<div class="t ui" style="left:751.2px;top:442.9px;color:#fff;font-size:4.6px">21/10/2021</div>
<svg class="a" style="left:781px;top:435px" width="14" height="13" viewBox="0 0 14 13"><path d="M2.4 2.4 h7 v5.2 h-3 l-1.6 1.6 v-1.6 h-2.4 z" fill="#fff"/><path d="M3.6 4 h4.6 M3.6 5.6 h4.6" stroke="#07161f" stroke-width="0.4"/><circle cx="9.4" cy="8.8" r="2.2" fill="#07161f" stroke="#fff" stroke-width="0.5"/></svg>
<div class="t ui" style="left:789.6px;top:441.8px;color:#fff;font-size:3.6px">1</div>
<div class="a" style="left:0;top:0;width:800px;height:423.6px;overflow:hidden">
<div class="a" id="qw" style="left:146.7px;top:31.4px;width:490.3px;height:341.6px;background:#f0f0f0;overflow:hidden;box-shadow:0 0 1.5px rgba(0,0,0,.6)">
<div class="a" style="left:0;top:0;width:490.3px;height:12.3px;background:#fff"></div>
<div class="t ui" style="left:3.50px;top:4.00px;color:#9a9a9a;font-size:5px">QuickWatch</div>
<div class="t ui" style="left:460.70px;top:3.20px;color:#8a8a8a;font-size:6px">?</div>
<svg class="a" style="left:477.80px;top:3.20px" width="6" height="6" viewBox="0 0 6 6"><path d="M0.9 0.9 L5.1 5.1 M5.1 0.9 L0.9 5.1" stroke="#7a7a7a" stroke-width="0.5"/></svg>
<div class="t ui dk" style="left:5.20px;top:20.20px;font-size:4.9px">Expression:</div>
<div class="a" style="left:4.60px;top:26.20px;width:419.00px;height:9px;background:#fff;border:1px solid #b4b4b4;box-sizing:border-box"></div>
<div class="t ui dk" style="left:6.10px;top:27.40px;font-size:4.9px;background:#c9c9c9;padding:0.5px 0.4px 0.6px 0.4px">((ServiceStack.WebServiceException)ex).ResponseBody</div>
<svg class="a" style="left:417.30px;top:28.60px" width="5" height="4" viewBox="0 0 5 4"><path d="M1 1.2 L2.5 2.8 L4 1.2" stroke="#555" stroke-width="0.5" fill="none"/></svg>
<div class="a ui dk" style="left:429.30px;top:18.60px;width:55.90px;height:9.40px;background:#e1e1e1;border:1px solid #c4c4c4;box-sizing:border-box;text-align:center;line-height:9.80px;font-size:4.9px">Reevaluate</div>
<div class="a ui dk" style="left:429.30px;top:31.10px;width:55.90px;height:9.80px;background:#e1e1e1;border:1px solid #c4c4c4;box-sizing:border-box;text-align:center;line-height:10.20px;font-size:4.9px">Add Watch</div>
<div class="t ui dk" style="left:5.20px;top:39.00px;font-size:4.9px">Value:</div>
<div class="a" style="left:4.90px;top:45.60px;width:480.20px;height:273.50px;background:#fff;border:1px solid #d0d0d0;border-top-color:#8c8c8c;border-left-color:#8c8c8c;box-sizing:border-box;overflow:hidden">
<div class="a" style="left:0;top:0;width:472.40px;height:7.1px;background:#f3f3f3;border-bottom:1px solid #c8c8c8"></div>
<div class="a" style="left:3.10px;top:0;width:1px;height:163.60px;background:#dcdcdc"></div>
<div class="a" style="left:158.10px;top:0;width:1px;height:163.60px;background:#dcdcdc"></div>
<div class="a" style="left:393.60px;top:0;width:1px;height:163.60px;background:#dcdcdc"></div>
<div class="t ui dk" style="left:5.40px;top:1.7px;font-size:4.9px">Name</div>
<div class="t ui dk" style="left:161.40px;top:1.7px;font-size:4.9px">Value</div>
<div class="t ui dk" style="left:395.60px;top:1.7px;font-size:4.9px">Type</div>
<div class="a" style="left:471.40px;top:0;width:8px;height:273.50px;background:#f0f0f0"></div>
<svg class="a" style="left:472.80px;top:2.4px" width="5" height="4" viewBox="0 0 5 4"><path d="M1 2.8 L2.5 1.2 L4 2.8" stroke="#8a8a8a" stroke-width="0.5" fill="none"/></svg>
<div class="a" style="left:0;top:8.65px;width:472.40px;height:7.08px;border-bottom:1px solid #d6d6d6;box-sizing:border-box;"></div>
<svg class="a" style="left:5.20px;top:8.85px" width="4" height="4" viewBox="0 0 4 4"><path d="M3.2 0.8 v2.4 h-2.4 z" fill="#404040"/></svg>
<svg class="a" style="left:10.60px;top:8.05px" width="6" height="6" viewBox="0 0 6 6"><path d="M3 0.6 L5.4 1.8 V4.2 L3 5.4 L0.6 4.2 V1.8 Z" fill="#1b6fc2"/><path d="M0.8 1.9 L3 3 L5.2 1.9 M3 3 V5.2" stroke="#9ccbf5" stroke-width="0.4" fill="none"/></svg>
<div class="t ui" style="left:19.70px;top:7.55px;font-size:4.9px;color:#1e1e1e;line-height:7px;height:7px">ex</div>
<div class="t ui" style="left:161.40px;top:7.55px;font-size:4.9px;color:#1e1e1e;width:232.00px;overflow:hidden;white-space:pre;line-height:7px;height:7px">{"Bad Request"}</div>
<div class="t ui" style="left:395.60px;top:7.55px;font-size:4.9px;color:#1e1e1e;width:74.80px;overflow:hidden;line-height:7px;height:7px">System.Exception {ServiceStack....</div>
<div class="a" style="left:0;top:15.73px;width:472.40px;height:7.08px;border-bottom:1px solid #d6d6d6;box-sizing:border-box;"></div>
<svg class="a" style="left:12.00px;top:16.38px" width="4" height="4" viewBox="0 0 4 4"><path d="M1.2 0.5 L2.9 2 L1.2 3.5 z" fill="none" stroke="#5a5a5a" stroke-width="0.55"/></svg>
<svg class="a" style="left:18.40px;top:15.63px" width="6" height="6" viewBox="0 0 6 6"><path d="M0.9 5.1 L3.4 2.6" stroke="#1e1e1e" stroke-width="1.15" stroke-linecap="round"/><path d="M2.5 2 Q2.7 0.6 4.3 0.6 L3.5 1.7 L4.3 2.5 L5.4 1.7 Q5.4 3.3 4 3.5 Z" fill="#1e1e1e"/></svg>
<div class="t ui" style="left:26.40px;top:14.63px;font-size:4.9px;color:#1e1e1e;line-height:7px;height:7px">Data</div>
<div class="t ui" style="left:161.40px;top:14.63px;font-size:4.9px;color:#1e1e1e;width:232.00px;overflow:hidden;white-space:pre;line-height:7px;height:7px">{System.Collections.ListDictionaryInternal}</div>
<div class="t ui" style="left:395.60px;top:14.63px;font-size:4.9px;color:#1e1e1e;width:74.80px;overflow:hidden;line-height:7px;height:7px">System.Collections.IDictionary {S...</div>
<div class="a" style="left:0;top:22.82px;width:472.40px;height:7.08px;border-bottom:1px solid #d6d6d6;box-sizing:border-box;"></div>
<svg class="a" style="left:18.40px;top:22.72px" width="6" height="6" viewBox="0 0 6 6"><path d="M0.9 5.1 L3.4 2.6" stroke="#1e1e1e" stroke-width="1.15" stroke-linecap="round"/><path d="M2.5 2 Q2.7 0.6 4.3 0.6 L3.5 1.7 L4.3 2.5 L5.4 1.7 Q5.4 3.3 4 3.5 Z" fill="#1e1e1e"/></svg>
<div class="t ui" style="left:26.40px;top:21.72px;font-size:4.9px;color:#1e1e1e;line-height:7px;height:7px">ErrorCode</div>
<div class="t ui" style="left:161.40px;top:21.72px;font-size:4.9px;color:#1e1e1e;width:220.00px;overflow:hidden;white-space:pre;line-height:7px;height:7px">"Bad Request"</div>
<div class="t ui" style="left:395.60px;top:21.72px;font-size:4.9px;color:#1e1e1e;width:74.80px;overflow:hidden;line-height:7px;height:7px">string</div>
<svg class="a" style="left:382.40px;top:23.32px" width="11" height="6" viewBox="0 0 11 6"><circle cx="2.6" cy="2.4" r="1.4" fill="none" stroke="#505050" stroke-width="0.6"/><path d="M3.6 3.4 L5 4.9" stroke="#505050" stroke-width="0.8"/><path d="M7.2 2.5 h2.2 l-1.1 1.2 z" fill="#303030"/></svg>
<div class="a" style="left:0;top:29.90px;width:472.40px;height:7.08px;border-bottom:1px solid #d6d6d6;box-sizing:border-box;"></div>
<svg class="a" style="left:18.40px;top:29.80px" width="6" height="6" viewBox="0 0 6 6"><path d="M0.9 5.1 L3.4 2.6" stroke="#1e1e1e" stroke-width="1.15" stroke-linecap="round"/><path d="M2.5 2 Q2.7 0.6 4.3 0.6 L3.5 1.7 L4.3 2.5 L5.4 1.7 Q5.4 3.3 4 3.5 Z" fill="#1e1e1e"/></svg>
<div class="t ui" style="left:26.40px;top:28.80px;font-size:4.9px;color:#1e1e1e;line-height:7px;height:7px">ErrorMessage</div>
<div class="t ui" style="left:161.40px;top:28.80px;font-size:4.9px;color:#1e1e1e;width:232.00px;overflow:hidden;white-space:pre;line-height:7px;height:7px">null</div>
<div class="t ui" style="left:395.60px;top:28.80px;font-size:4.9px;color:#1e1e1e;width:74.80px;overflow:hidden;line-height:7px;height:7px">string</div>
<div class="a" style="left:0;top:36.98px;width:472.40px;height:7.08px;border-bottom:1px solid #d6d6d6;box-sizing:border-box;"></div>
<svg class="a" style="left:18.40px;top:36.88px" width="6" height="6" viewBox="0 0 6 6"><path d="M0.9 5.1 L3.4 2.6" stroke="#1e1e1e" stroke-width="1.15" stroke-linecap="round"/><path d="M2.5 2 Q2.7 0.6 4.3 0.6 L3.5 1.7 L4.3 2.5 L5.4 1.7 Q5.4 3.3 4 3.5 Z" fill="#1e1e1e"/></svg>
<div class="t ui" style="left:26.40px;top:35.88px;font-size:4.9px;color:#1e1e1e;line-height:7px;height:7px">HResult</div>
<div class="t ui" style="left:161.40px;top:35.88px;font-size:4.9px;color:#1e1e1e;width:232.00px;overflow:hidden;white-space:pre;line-height:7px;height:7px">-2146233088</div>
<div class="t ui" style="left:395.60px;top:35.88px;font-size:4.9px;color:#1e1e1e;width:74.80px;overflow:hidden;line-height:7px;height:7px">int</div>
<div class="a" style="left:0;top:44.06px;width:472.40px;height:7.08px;border-bottom:1px solid #d6d6d6;box-sizing:border-box;"></div>
<svg class="a" style="left:18.40px;top:43.96px" width="6" height="6" viewBox="0 0 6 6"><path d="M0.9 5.1 L3.4 2.6" stroke="#1e1e1e" stroke-width="1.15" stroke-linecap="round"/><path d="M2.5 2 Q2.7 0.6 4.3 0.6 L3.5 1.7 L4.3 2.5 L5.4 1.7 Q5.4 3.3 4 3.5 Z" fill="#1e1e1e"/></svg>
<div class="t ui" style="left:26.40px;top:42.96px;font-size:4.9px;color:#1e1e1e;line-height:7px;height:7px">HelpLink</div>
<div class="t ui" style="left:161.40px;top:42.96px;font-size:4.9px;color:#1e1e1e;width:232.00px;overflow:hidden;white-space:pre;line-height:7px;height:7px">null</div>
<div class="t ui" style="left:395.60px;top:42.96px;font-size:4.9px;color:#1e1e1e;width:74.80px;overflow:hidden;line-height:7px;height:7px">string</div>
<div class="a" style="left:0;top:51.15px;width:472.40px;height:7.08px;border-bottom:1px solid #d6d6d6;box-sizing:border-box;"></div>
<svg class="a" style="left:12.00px;top:51.80px" width="4" height="4" viewBox="0 0 4 4"><path d="M1.2 0.5 L2.9 2 L1.2 3.5 z" fill="none" stroke="#5a5a5a" stroke-width="0.55"/></svg>
<svg class="a" style="left:18.40px;top:51.05px" width="6" height="6" viewBox="0 0 6 6"><path d="M0.9 5.1 L3.4 2.6" stroke="#1e1e1e" stroke-width="1.15" stroke-linecap="round"/><path d="M2.5 2 Q2.7 0.6 4.3 0.6 L3.5 1.7 L4.3 2.5 L5.4 1.7 Q5.4 3.3 4 3.5 Z" fill="#1e1e1e"/></svg>
<div class="t ui" style="left:26.40px;top:50.05px;font-size:4.9px;color:#1e1e1e;line-height:7px;height:7px">InnerException</div>
<div class="t ui" style="left:161.40px;top:50.05px;font-size:4.9px;color:#1e1e1e;width:232.00px;overflow:hidden;white-space:pre;line-height:7px;height:7px">null</div>
<div class="t ui" style="left:395.60px;top:50.05px;font-size:4.9px;color:#1e1e1e;width:74.80px;overflow:hidden;line-height:7px;height:7px">System.Exception</div>
<div class="a" style="left:0;top:58.23px;width:472.40px;height:7.08px;border-bottom:1px solid #d6d6d6;box-sizing:border-box;"></div>
<svg class="a" style="left:18.40px;top:58.13px" width="6" height="6" viewBox="0 0 6 6"><path d="M0.9 5.1 L3.4 2.6" stroke="#1e1e1e" stroke-width="1.15" stroke-linecap="round"/><path d="M2.5 2 Q2.7 0.6 4.3 0.6 L3.5 1.7 L4.3 2.5 L5.4 1.7 Q5.4 3.3 4 3.5 Z" fill="#1e1e1e"/></svg>
<div class="t ui" style="left:26.40px;top:57.13px;font-size:4.9px;color:#1e1e1e;line-height:7px;height:7px">Message</div>
<div class="t ui" style="left:161.40px;top:57.13px;font-size:4.9px;color:#1e1e1e;width:220.00px;overflow:hidden;white-space:pre;line-height:7px;height:7px">"Bad Request"</div>
<div class="t ui" style="left:395.60px;top:57.13px;font-size:4.9px;color:#1e1e1e;width:74.80px;overflow:hidden;line-height:7px;height:7px">string</div>
<svg class="a" style="left:382.40px;top:58.73px" width="11" height="6" viewBox="0 0 11 6"><circle cx="2.6" cy="2.4" r="1.4" fill="none" stroke="#505050" stroke-width="0.6"/><path d="M3.6 3.4 L5 4.9" stroke="#505050" stroke-width="0.8"/><path d="M7.2 2.5 h2.2 l-1.1 1.2 z" fill="#303030"/></svg>
<div class="a" style="left:0;top:65.31px;width:472.40px;height:7.08px;border-bottom:1px solid #d6d6d6;box-sizing:border-box;background:#0078d7;border-bottom-color:#0078d7;"></div>
<div class="a" style="left:0;top:65.01px;width:21.00px;height:7.38px;background:#fff;border:1px solid #8a8a8a;box-sizing:border-box"></div>
<svg class="a" style="left:18.40px;top:65.21px" width="6" height="6" viewBox="0 0 6 6"><path d="M0.9 5.1 L3.4 2.6" stroke="#1e1e1e" stroke-width="1.15" stroke-linecap="round"/><path d="M2.5 2 Q2.7 0.6 4.3 0.6 L3.5 1.7 L4.3 2.5 L5.4 1.7 Q5.4 3.3 4 3.5 Z" fill="#1e1e1e"/></svg>
<div class="t ui" style="left:26.40px;top:64.21px;font-size:4.9px;color:#fff;line-height:7px;height:7px">ResponseBody</div>
<div class="t ui" style="left:161.40px;top:64.21px;font-size:4.9px;color:#fff;width:220.00px;overflow:hidden;white-space:pre;line-height:7px;height:7px"><span style="letter-spacing:0.165px">&quot;&lt;!DOCTYPE html&gt;\r\n&lt;html&gt;\r\n    </span>&lt;head&gt;\r\n        <span style="letter-spacing:0.07px">&lt;title&gt;The length of the query string for this ...</span></div>
<div class="t ui" style="left:395.60px;top:64.21px;font-size:4.9px;color:#fff;width:74.80px;overflow:hidden;line-height:7px;height:7px">string</div>
<div class="a" style="left:382.00px;top:65.61px;width:11.4px;height:6.2px;background:#e5f1fb;border:1px solid #a8cbee;box-sizing:border-box"></div>
<div class="a" style="left:388.40px;top:65.61px;width:1px;height:6.2px;background:#a8cbee"></div>
<svg class="a" style="left:382.40px;top:65.81px" width="11" height="6" viewBox="0 0 11 6"><circle cx="2.6" cy="2.4" r="1.4" fill="none" stroke="#505050" stroke-width="0.6"/><path d="M3.6 3.4 L5 4.9" stroke="#505050" stroke-width="0.8"/><path d="M7.2 2.5 h2.2 l-1.1 1.2 z" fill="#303030"/></svg>
<div class="a" style="left:0;top:72.40px;width:472.40px;height:7.08px;border-bottom:1px solid #d6d6d6;box-sizing:border-box;"></div>
<svg class="a" style="left:18.40px;top:72.30px" width="6" height="6" viewBox="0 0 6 6"><path d="M0.9 5.1 L3.4 2.6" stroke="#1e1e1e" stroke-width="1.15" stroke-linecap="round"/><path d="M2.5 2 Q2.7 0.6 4.3 0.6 L3.5 1.7 L4.3 2.5 L5.4 1.7 Q5.4 3.3 4 3.5 Z" fill="#1e1e1e"/></svg>
<div class="t ui" style="left:26.40px;top:71.30px;font-size:4.9px;color:#1e1e1e;line-height:7px;height:7px">ResponseDto</div>
<div class="t ui" style="left:161.40px;top:71.30px;font-size:4.9px;color:#1e1e1e;width:232.00px;overflow:hidden;white-space:pre;line-height:7px;height:7px">null</div>
<div class="t ui" style="left:395.60px;top:71.30px;font-size:4.9px;color:#1e1e1e;width:74.80px;overflow:hidden;line-height:7px;height:7px">object</div>
<div class="a" style="left:0;top:79.48px;width:472.40px;height:7.08px;border-bottom:1px solid #d6d6d6;box-sizing:border-box;"></div>
<svg class="a" style="left:12.00px;top:80.13px" width="4" height="4" viewBox="0 0 4 4"><path d="M1.2 0.5 L2.9 2 L1.2 3.5 z" fill="none" stroke="#5a5a5a" stroke-width="0.55"/></svg>
<svg class="a" style="left:18.40px;top:79.38px" width="6" height="6" viewBox="0 0 6 6"><path d="M0.9 5.1 L3.4 2.6" stroke="#1e1e1e" stroke-width="1.15" stroke-linecap="round"/><path d="M2.5 2 Q2.7 0.6 4.3 0.6 L3.5 1.7 L4.3 2.5 L5.4 1.7 Q5.4 3.3 4 3.5 Z" fill="#1e1e1e"/></svg>
<div class="t ui" style="left:26.40px;top:78.38px;font-size:4.9px;color:#1e1e1e;line-height:7px;height:7px">ResponseHeaders</div>
<div class="t ui" style="left:161.40px;top:78.38px;font-size:4.9px;color:#1e1e1e;width:232.00px;overflow:hidden;white-space:pre;line-height:7px;height:7px">{Content-Length: 3664,Cache-Control: private,Content-Type: text/html}</div>
<div class="t ui" style="left:395.60px;top:78.38px;font-size:4.9px;color:#1e1e1e;width:74.80px;overflow:hidden;line-height:7px;height:7px">System.Net.WebHeaderCollection</div>
<div class="a" style="left:0;top:86.56px;width:472.40px;height:7.08px;border-bottom:1px solid #d6d6d6;box-sizing:border-box;"></div>
<svg class="a" style="left:18.40px;top:86.46px" width="6" height="6" viewBox="0 0 6 6"><path d="M0.9 5.1 L3.4 2.6" stroke="#1e1e1e" stroke-width="1.15" stroke-linecap="round"/><path d="M2.5 2 Q2.7 0.6 4.3 0.6 L3.5 1.7 L4.3 2.5 L5.4 1.7 Q5.4 3.3 4 3.5 Z" fill="#1e1e1e"/></svg>
<div class="t ui" style="left:26.40px;top:85.46px;font-size:4.9px;color:#1e1e1e;line-height:7px;height:7px">ResponseStatus</div>
<div class="t ui" style="left:161.40px;top:85.46px;font-size:4.9px;color:#1e1e1e;width:232.00px;overflow:hidden;white-space:pre;line-height:7px;height:7px">null</div>
<div class="t ui" style="left:395.60px;top:85.46px;font-size:4.9px;color:#1e1e1e;width:74.80px;overflow:hidden;line-height:7px;height:7px">ServiceStack.ResponseStatus</div>
<div class="a" style="left:0;top:93.65px;width:472.40px;height:7.08px;border-bottom:1px solid #d6d6d6;box-sizing:border-box;"></div>
<svg class="a" style="left:18.40px;top:93.55px" width="6" height="6" viewBox="0 0 6 6"><path d="M0.9 5.1 L3.4 2.6" stroke="#1e1e1e" stroke-width="1.15" stroke-linecap="round"/><path d="M2.5 2 Q2.7 0.6 4.3 0.6 L3.5 1.7 L4.3 2.5 L5.4 1.7 Q5.4 3.3 4 3.5 Z" fill="#1e1e1e"/></svg>
<div class="t ui" style="left:26.40px;top:92.55px;font-size:4.9px;color:#1e1e1e;line-height:7px;height:7px">ServerStackTrace</div>
<div class="t ui" style="left:161.40px;top:92.55px;font-size:4.9px;color:#1e1e1e;width:232.00px;overflow:hidden;white-space:pre;line-height:7px;height:7px">null</div>
<div class="t ui" style="left:395.60px;top:92.55px;font-size:4.9px;color:#1e1e1e;width:74.80px;overflow:hidden;line-height:7px;height:7px">string</div>
<div class="a" style="left:0;top:100.73px;width:472.40px;height:7.08px;border-bottom:1px solid #d6d6d6;box-sizing:border-box;"></div>
<svg class="a" style="left:18.40px;top:100.63px" width="6" height="6" viewBox="0 0 6 6"><path d="M0.9 5.1 L3.4 2.6" stroke="#1e1e1e" stroke-width="1.15" stroke-linecap="round"/><path d="M2.5 2 Q2.7 0.6 4.3 0.6 L3.5 1.7 L4.3 2.5 L5.4 1.7 Q5.4 3.3 4 3.5 Z" fill="#1e1e1e"/></svg>
<div class="t ui" style="left:26.40px;top:99.63px;font-size:4.9px;color:#1e1e1e;line-height:7px;height:7px">Source</div>
<div class="t ui" style="left:161.40px;top:99.63px;font-size:4.9px;color:#1e1e1e;width:220.00px;overflow:hidden;white-space:pre;line-height:7px;height:7px">"ServiceStack.Client"</div>
<div class="t ui" style="left:395.60px;top:99.63px;font-size:4.9px;color:#1e1e1e;width:74.80px;overflow:hidden;line-height:7px;height:7px">string</div>
<svg class="a" style="left:382.40px;top:101.23px" width="11" height="6" viewBox="0 0 11 6"><circle cx="2.6" cy="2.4" r="1.4" fill="none" stroke="#505050" stroke-width="0.6"/><path d="M3.6 3.4 L5 4.9" stroke="#505050" stroke-width="0.8"/><path d="M7.2 2.5 h2.2 l-1.1 1.2 z" fill="#303030"/></svg>
<div class="a" style="left:0;top:107.81px;width:472.40px;height:7.08px;border-bottom:1px solid #d6d6d6;box-sizing:border-box;"></div>
<svg class="a" style="left:18.40px;top:107.71px" width="6" height="6" viewBox="0 0 6 6"><path d="M0.9 5.1 L3.4 2.6" stroke="#1e1e1e" stroke-width="1.15" stroke-linecap="round"/><path d="M2.5 2 Q2.7 0.6 4.3 0.6 L3.5 1.7 L4.3 2.5 L5.4 1.7 Q5.4 3.3 4 3.5 Z" fill="#1e1e1e"/></svg>
<div class="t ui" style="left:26.40px;top:106.71px;font-size:4.9px;color:#1e1e1e;line-height:7px;height:7px">StackTrace</div>
<div class="t ui" style="left:161.40px;top:106.71px;font-size:4.9px;color:#1e1e1e;width:220.00px;overflow:hidden;white-space:pre;line-height:7px;height:7px">"   at ServiceStack.ServiceClientBase.ThrowWebServiceException[TResponse]</div>
<div class="t ui" style="left:395.60px;top:106.71px;font-size:4.9px;color:#1e1e1e;width:74.80px;overflow:hidden;line-height:7px;height:7px">string</div>
<svg class="a" style="left:382.40px;top:108.31px" width="11" height="6" viewBox="0 0 11 6"><circle cx="2.6" cy="2.4" r="1.4" fill="none" stroke="#505050" stroke-width="0.6"/><path d="M3.6 3.4 L5 4.9" stroke="#505050" stroke-width="0.8"/><path d="M7.2 2.5 h2.2 l-1.1 1.2 z" fill="#303030"/></svg>
<div class="a" style="left:0;top:114.90px;width:472.40px;height:7.08px;border-bottom:1px solid #d6d6d6;box-sizing:border-box;"></div>
<svg class="a" style="left:18.40px;top:114.80px" width="6" height="6" viewBox="0 0 6 6"><path d="M0.9 5.1 L3.4 2.6" stroke="#1e1e1e" stroke-width="1.15" stroke-linecap="round"/><path d="M2.5 2 Q2.7 0.6 4.3 0.6 L3.5 1.7 L4.3 2.5 L5.4 1.7 Q5.4 3.3 4 3.5 Z" fill="#1e1e1e"/></svg>
<div class="t ui" style="left:26.40px;top:113.80px;font-size:4.9px;color:#1e1e1e;line-height:7px;height:7px">State</div>
<div class="t ui" style="left:161.40px;top:113.80px;font-size:4.9px;color:#1e1e1e;width:232.00px;overflow:hidden;white-space:pre;line-height:7px;height:7px">null</div>
<div class="t ui" style="left:395.60px;top:113.80px;font-size:4.9px;color:#1e1e1e;width:74.80px;overflow:hidden;line-height:7px;height:7px">object</div>
<div class="a" style="left:0;top:121.98px;width:472.40px;height:7.08px;border-bottom:1px solid #d6d6d6;box-sizing:border-box;"></div>
<svg class="a" style="left:18.40px;top:121.88px" width="6" height="6" viewBox="0 0 6 6"><path d="M0.9 5.1 L3.4 2.6" stroke="#1e1e1e" stroke-width="1.15" stroke-linecap="round"/><path d="M2.5 2 Q2.7 0.6 4.3 0.6 L3.5 1.7 L4.3 2.5 L5.4 1.7 Q5.4 3.3 4 3.5 Z" fill="#1e1e1e"/></svg>
<div class="t ui" style="left:26.40px;top:120.88px;font-size:4.9px;color:#1e1e1e;line-height:7px;height:7px">StatusCode</div>
<div class="t ui" style="left:161.40px;top:120.88px;font-size:4.9px;color:#1e1e1e;width:232.00px;overflow:hidden;white-space:pre;line-height:7px;height:7px">400</div>
<div class="t ui" style="left:395.60px;top:120.88px;font-size:4.9px;color:#1e1e1e;width:74.80px;overflow:hidden;line-height:7px;height:7px">int</div>
<div class="a" style="left:0;top:129.06px;width:472.40px;height:7.08px;border-bottom:1px solid #d6d6d6;box-sizing:border-box;"></div>
<svg class="a" style="left:18.40px;top:128.96px" width="6" height="6" viewBox="0 0 6 6"><path d="M0.9 5.1 L3.4 2.6" stroke="#1e1e1e" stroke-width="1.15" stroke-linecap="round"/><path d="M2.5 2 Q2.7 0.6 4.3 0.6 L3.5 1.7 L4.3 2.5 L5.4 1.7 Q5.4 3.3 4 3.5 Z" fill="#1e1e1e"/></svg>
<div class="t ui" style="left:26.40px;top:127.96px;font-size:4.9px;color:#1e1e1e;line-height:7px;height:7px">StatusDescription</div>
<div class="t ui" style="left:161.40px;top:127.96px;font-size:4.9px;color:#1e1e1e;width:220.00px;overflow:hidden;white-space:pre;line-height:7px;height:7px">"Bad Request"</div>
<div class="t ui" style="left:395.60px;top:127.96px;font-size:4.9px;color:#1e1e1e;width:74.80px;overflow:hidden;line-height:7px;height:7px">string</div>
<svg class="a" style="left:382.40px;top:129.56px" width="11" height="6" viewBox="0 0 11 6"><circle cx="2.6" cy="2.4" r="1.4" fill="none" stroke="#505050" stroke-width="0.6"/><path d="M3.6 3.4 L5 4.9" stroke="#505050" stroke-width="0.8"/><path d="M7.2 2.5 h2.2 l-1.1 1.2 z" fill="#303030"/></svg>
<div class="a" style="left:0;top:136.14px;width:472.40px;height:7.08px;border-bottom:1px solid #d6d6d6;box-sizing:border-box;"></div>
<svg class="a" style="left:12.00px;top:136.79px" width="4" height="4" viewBox="0 0 4 4"><path d="M1.2 0.5 L2.9 2 L1.2 3.5 z" fill="none" stroke="#5a5a5a" stroke-width="0.55"/></svg>
<svg class="a" style="left:18.40px;top:136.04px" width="6" height="6" viewBox="0 0 6 6"><path d="M0.9 5.1 L3.4 2.6" stroke="#1e1e1e" stroke-width="1.15" stroke-linecap="round"/><path d="M2.5 2 Q2.7 0.6 4.3 0.6 L3.5 1.7 L4.3 2.5 L5.4 1.7 Q5.4 3.3 4 3.5 Z" fill="#1e1e1e"/></svg>
<div class="t ui" style="left:26.40px;top:135.04px;font-size:4.9px;color:#1e1e1e;line-height:7px;height:7px">TargetSite</div>
<div class="t ui" style="left:161.40px;top:135.04px;font-size:4.9px;color:#1e1e1e;width:232.00px;overflow:hidden;white-space:pre;line-height:7px;height:7px">{Void ThrowWebServiceException[TResponse](System.Exception)}</div>
<div class="t ui" style="left:395.60px;top:135.04px;font-size:4.9px;color:#1e1e1e;width:74.80px;overflow:hidden;line-height:7px;height:7px">System.Reflection.MethodBase</div>
<div class="a" style="left:0;top:143.23px;width:472.40px;height:7.08px;border-bottom:1px solid #d6d6d6;box-sizing:border-box;"></div>
<svg class="a" style="left:18.40px;top:143.13px" width="6" height="6" viewBox="0 0 6 6"><path d="M1 2 L3.4 0.8 L5.2 1.8 V3.8 L3 5 L1 4 Z" fill="#3a8ad8"/><rect x="0.6" y="3.2" width="2.2" height="2.4" fill="#f0f0f0" stroke="#555" stroke-width="0.35"/></svg>
<div class="t ui" style="left:26.40px;top:142.13px;font-size:4.9px;color:#1e1e1e;line-height:7px;height:7px">responseStatus</div>
<div class="t ui" style="left:161.40px;top:142.13px;font-size:4.9px;color:#1e1e1e;width:232.00px;overflow:hidden;white-space:pre;line-height:7px;height:7px">null</div>
<div class="t ui" style="left:395.60px;top:142.13px;font-size:4.9px;color:#1e1e1e;width:74.80px;overflow:hidden;line-height:7px;height:7px">ServiceStack.ResponseStatus</div>
<div class="a" style="left:0;top:150.31px;width:472.40px;height:7.08px;border-bottom:1px solid #d6d6d6;box-sizing:border-box;"></div>
<svg class="a" style="left:12.00px;top:150.96px" width="4" height="4" viewBox="0 0 4 4"><path d="M1.2 0.5 L2.9 2 L1.2 3.5 z" fill="none" stroke="#5a5a5a" stroke-width="0.55"/></svg>
<svg class="a" style="left:18.40px;top:150.21px" width="6" height="6" viewBox="0 0 6 6"><path d="M1 3 L2.6 0.8 L4 1.6 L2.8 3.2 Z" fill="#d98a1c"/><rect x="2.6" y="3" width="2.6" height="2.4" fill="#e8a33d"/><rect x="0.8" y="3.6" width="1.6" height="1.6" fill="#c07010"/></svg>
<div class="t ui" style="left:26.40px;top:149.21px;font-size:4.9px;color:#1e1e1e;line-height:7px;height:7px">Static members</div>
<div class="a" style="left:0;top:157.39px;width:472.40px;height:7.08px;border-bottom:1px solid #d6d6d6;box-sizing:border-box;"></div>
<svg class="a" style="left:12.00px;top:158.04px" width="4" height="4" viewBox="0 0 4 4"><path d="M1.2 0.5 L2.9 2 L1.2 3.5 z" fill="none" stroke="#5a5a5a" stroke-width="0.55"/></svg>
<svg class="a" style="left:18.40px;top:156.79px" width="6" height="6" viewBox="0 0 6 6"><path d="M3 0.6 L5.4 1.8 V4.2 L3 5.4 L0.6 4.2 V1.8 Z" fill="#1b6fc2"/><path d="M0.8 1.9 L3 3 L5.2 1.9 M3 3 V5.2" stroke="#9ccbf5" stroke-width="0.4" fill="none"/></svg>
<div class="t ui" style="left:26.40px;top:156.29px;font-size:4.9px;color:#1e1e1e;line-height:7px;height:7px">Non-Public members</div>
<svg class="a" style="left:152.90px;top:66.01px" width="5" height="4" viewBox="0 0 5 4"><path d="M4 0.8 L1.6 2 L4 3.2" fill="#e8e8e8"/></svg>
</div>
</div>
<div class="a" id="hv" style="left:388.1px;top:155.6px;width:315.0px;height:268.20000000000005px;background:#f0f0f0;overflow:hidden;box-shadow:0 1px 7px rgba(0,0,0,.45),0 0 0.5px rgba(0,0,0,.6)">
<div class="a" style="left:0;top:0;width:315.0px;height:12px;background:#fff"></div>
<div class="t ui dk" style="left:3.80px;top:3.40px;font-size:4.9px">HTML Visualizer</div>
<svg class="a" style="left:263.90px;top:1.90px" width="50" height="8" viewBox="0 0 50 8"><path d="M2 4 h4" stroke="#c0c0c0" stroke-width="0.5"/><rect x="20.3" y="1.8" width="4.2" height="4.2" fill="none" stroke="#333" stroke-width="0.6"/><path d="M39.6 1.8 L43.8 6 M43.8 1.8 L39.6 6" stroke="#333" stroke-width="0.6"/></svg>
<div class="t ui dk" style="left:8.80px;top:17.90px;font-size:4.9px">Expression:</div>
<div class="a" style="left:52.10px;top:15.80px;width:256.30px;height:7.4px;background:#f0f0f0;border:1px solid #cfcfcf;box-sizing:border-box"></div>
<div class="t ui" style="left:53.50px;top:17.70px;font-size:4.9px;color:#3a3a3a">((ServiceStack.WebServiceException)ex).ResponseBody</div>
<div class="t ui dk" style="left:8.80px;top:30.80px;font-size:4.9px">Value:</div>
<div class="a" style="left:6.30px;top:39.70px;width:302.70px;height:208.70px;background:#fff;border:1px solid #b8b8b8;box-sizing:border-box;overflow:hidden">
<div class="t" style="font-family:'DejaVu Sans',sans-serif;left:3.00px;top:6.90px;font-size:10px;color:#ff1a1a;letter-spacing:0.02px">Server Error in '/' Application.</div>
<div class="a" style="left:3.10px;top:23.10px;width:295.6px;height:1px;background:#d4d4d4"></div>
<div class="t" style="font-family:'DejaVu Sans',sans-serif;left:3.20px;top:31.30px;font-size:7.8px;font-style:italic;color:#800000;line-height:9.6px;white-space:pre;letter-spacing:-0.02px">The length of the query string for this request exceeds the configured
maxQueryStringLength value.</div>
<div class="t" style="left:3.10px;top:56.40px;font-size:4.69px;color:#000;line-height:5.6px;white-space:pre;font-family:'Liberation Sans',sans-serif;"><b style="font-family:'DejaVu Sans',sans-serif;font-size:4.7px;letter-spacing:-0.05px">Description:</b> <span class="ar">An unhandled exception occurred during the execution of the current web request. Please review the stack trace for more
information about the error and where it originated in the code.</span></div>
<div class="t" style="left:3.10px;top:73.60px;font-size:4.69px;color:#000;line-height:5.6px;white-space:pre;font-family:'Liberation Sans',sans-serif;"><b style="font-family:'DejaVu Sans',sans-serif;font-size:4.7px;letter-spacing:-0.05px">Exception Details:</b> <span class="ar">System.Web.HttpException: The length of the query string for this request exceeds the configured
maxQueryStringLength value.</span></div>
<div class="t" style="left:3.10px;top:92.60px;font-size:4.7px;color:#000;font-family:'DejaVu Sans',sans-serif;font-weight:bold;letter-spacing:-0.05px">Source Error:</div>
<div class="a" style="left:3.10px;top:100.90px;width:294.3px;height:20.80px;background:#ffffcc"></div>
<div class="t mono" style="-webkit-text-stroke:0;left:4.60px;top:104.90px;font-size:4.66px;color:#222;line-height:5.6px;white-space:pre">An unhandled exception was generated during the execution of the current web request. Information
regarding the origin and location of the exception can be identified using the exception stack trace
below.</div>
<div class="t" style="left:3.10px;top:130.20px;font-size:4.7px;color:#000;font-family:'DejaVu Sans',sans-serif;font-weight:bold;letter-spacing:-0.05px">Stack Trace:</div>
<div class="a" style="left:3.10px;top:139.70px;width:300px;height:38.80px;background:#ffffcc"></div>
<div class="t mono" style="-webkit-text-stroke:0.03px #000;left:8.20px;top:153.10px;font-size:5.58px;color:#000;line-height:7.9px;white-space:pre">[HttpException (0x80004005): The length of the query string for this request exceeds the configured maxQueryStringLength value.]
   System.Web.HttpRequest.ValidateInputIfRequiredByConfig() +9914837
   System.Web.PipelineStepManager.ValidateHelper(HttpContext context) +55</div>
<div class="a" style="left:3.10px;top:187.90px;width:295.30px;height:1px;background:#d4d4d4"></div>
<div class="t" style="left:3.10px;top:192.40px;font-size:4.75px;color:#000;font-family:'Liberation Sans',sans-serif;"><b style="font-family:'DejaVu Sans',sans-serif;font-size:4.7px;letter-spacing:-0.05px">Version Information:</b> <span class="ar">Microsoft .NET Framework Version:4.0.30319; ASP.NET Version:4.8.4330.0</span></div>
<div class="a" style="left:0;top:201.10px;width:302.70px;height:6.6px;background:#f0f0f0"></div>
<div class="a" style="left:13.60px;top:201.10px;width:186.00px;height:6.6px;background:#cdcdcd"></div>
<svg class="a" style="left:6.00px;top:201.40px" width="5" height="6" viewBox="0 0 5 6"><path d="M3.4 1 L1.4 3 L3.4 5" stroke="#303030" stroke-width="0.95" fill="none"/></svg>
<svg class="a" style="left:289.40px;top:201.40px" width="5" height="6" viewBox="0 0 5 6"><path d="M1.6 1 L3.6 3 L1.6 5" stroke="#303030" stroke-width="0.95" fill="none"/></svg>
</div>
<div class="a ui dk" style="left:277.90px;top:253.80px;width:30.60px;height:7.3px;background:#e1e1e1;border:1px solid #9a9a9a;box-sizing:border-box;text-align:center;line-height:7.4px;font-size:4.9px">Close</div>
</div>
</div>
</body></html>
